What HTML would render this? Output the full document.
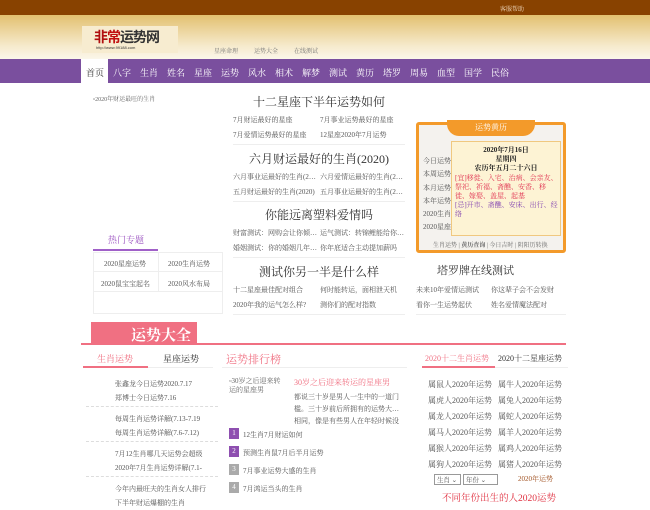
<!DOCTYPE html>
<html><head><meta charset="utf-8"><style>
*{margin:0;padding:0;box-sizing:border-box}
body{width:650px;height:500px;overflow:hidden;position:relative;background:#fff;font-family:"Liberation Serif","Noto Serif CJK SC",serif;color:#555;font-size:7px}
.a{position:absolute;white-space:nowrap}
.top{left:0;top:0;width:650px;height:15px;background:#884200}
.hdr{left:0;top:15px;width:650px;height:44px;background:linear-gradient(#e2c070,#f6eacc 70%,#fbf6ea)}
.nav{left:0;top:59px;width:650px;height:24px;background:#7a4f9e}
.nav span{position:absolute;top:7px;color:#fff;font-size:9px}
h3{position:absolute;font-weight:normal;font-size:12px;color:#333;text-align:center;width:172px;left:233px}
.sep{position:absolute;height:1px;background:#eee}
.dot{position:absolute;height:1px;border-top:1px dashed #ddd}
</style></head><body>
<div class="a top"></div>
<div class="a" style="left:500px;top:4px;color:#f3dcc0;font-size:6px">客服帮助</div>
<div class="a hdr"></div>
<div class="a" style="left:82px;top:26px;width:96px;height:27px;background:#f7ecd0"></div>
<div class="a" style="left:94px;top:27px;font-size:14px;font-weight:bold;font-family:'Noto Sans CJK SC',sans-serif;letter-spacing:-1px"><span style="color:#b01010">非</span><span style="color:#c01010">常</span><span style="color:#333">运势网</span></div>
<div class="a" style="left:96px;top:45px;font-size:4px;color:#333;font-family:'Liberation Sans',sans-serif">http://www.99188.com</div>
<div class="a" style="left:214px;top:46px;color:#777;font-size:6px">星座命理</div>
<div class="a" style="left:254px;top:46px;color:#777;font-size:6px">运势大全</div>
<div class="a" style="left:294px;top:46px;color:#777;font-size:6px">在线测试</div>
<div class="a nav">
<div style="position:absolute;left:81px;top:0;width:27px;height:24px;background:#fff"></div>
<span style="left:86px;color:#333">首页</span><span style="left:113px">八字</span><span style="left:140px">生肖</span><span style="left:167px">姓名</span><span style="left:194px">星座</span><span style="left:221px">运势</span><span style="left:248px">风水</span><span style="left:275px">相术</span><span style="left:302px">解梦</span><span style="left:329px">测试</span><span style="left:356px">黄历</span><span style="left:383px">塔罗</span><span style="left:410px">周易</span><span style="left:437px">血型</span><span style="left:464px">国学</span><span style="left:491px">民俗</span>
</div>
<div class="a" style="left:93px;top:94px;font-size:6px;color:#666">▫2020年财运最旺的生肖</div>
<div class="a" style="left:108px;top:233px;color:#9a50c0;font-size:9px">热门专题</div>
<div class="a" style="left:93px;top:249px;width:65px;height:2px;background:#a060c8"></div>
<div class="a" style="left:93px;top:252px;width:130px;height:62px;border:1px solid #eee"></div>
<div class="a" style="left:158px;top:252px;width:1px;height:39px;background:#eee"></div>
<div class="a" style="left:93px;top:271px;width:130px;height:1px;background:#eee"></div>
<div class="a" style="left:93px;top:291px;width:130px;height:1px;background:#eee"></div>
<div class="a" style="left:104px;top:259px">2020星座运势</div><div class="a" style="left:168px;top:259px">2020生肖运势</div>
<div class="a" style="left:101px;top:279px">2020鼠宝宝起名</div><div class="a" style="left:168px;top:279px">2020风水布局</div>

<h3 style="top:93px">十二星座下半年运势如何</h3>
<div class="a" style="left:233px;top:115px">7月财运最好的星座</div><div class="a" style="left:320px;top:115px">7月事业运势最好的星座</div>
<div class="a" style="left:233px;top:130px">7月爱情运势最好的星座</div><div class="a" style="left:320px;top:130px">12星座2020年7月运势</div>
<div class="sep" style="left:233px;top:144px;width:172px"></div>
<h3 style="top:150px">六月财运最好的生肖(2020)</h3>
<div class="a" style="left:233px;top:172px">六月事业运最好的生肖(2…</div><div class="a" style="left:320px;top:172px">六月爱情运最好的生肖(2…</div>
<div class="a" style="left:233px;top:187px">五月财运最好的生肖(2020)</div><div class="a" style="left:320px;top:187px">五月事业运最好的生肖(2…</div>
<div class="sep" style="left:233px;top:201px;width:172px"></div>
<h3 style="top:206px">你能远离塑料爱情吗</h3>
<div class="a" style="left:233px;top:228px">财富测试：网购会让你倾…</div><div class="a" style="left:320px;top:228px">运气测试：转锦鲤能给你…</div>
<div class="a" style="left:233px;top:243px">婚姻测试：你的婚姻几年…</div><div class="a" style="left:320px;top:243px">你年底适合主动提加薪吗</div>
<div class="sep" style="left:233px;top:257px;width:172px"></div>
<h3 style="top:263px">测试你另一半是什么样</h3>
<div class="a" style="left:233px;top:285px">十二星座最佳配对组合</div><div class="a" style="left:320px;top:285px">何时能转运，面相泄天机</div>
<div class="a" style="left:233px;top:300px">2020年我的运气怎么样?</div><div class="a" style="left:320px;top:300px">测你们的配对指数</div>
<div class="sep" style="left:233px;top:314px;width:172px"></div>

<div class="a" style="left:416px;top:122px;width:150px;height:131px;border:3px solid #f39a2a;border-radius:3px;background:#f4f2ee"></div>
<div class="a" style="left:447px;top:120px;width:88px;height:16px;background:#f39a2a;border-radius:0 0 12px 12px;color:#fff;text-align:center;font-size:8px;line-height:16px">运势黄历</div>
<div class="a" style="left:451px;top:141px;width:110px;height:95px;background:#fdf3d4;border:1px solid #f0c880"></div>
<div class="a" style="left:423px;top:155px;line-height:13.3px;font-size:7px">今日运势<br>本周运势<br>本月运势<br>本年运势<br>2020生肖<br>2020星座</div>
<div class="a" style="left:451px;top:146px;width:110px;text-align:center;color:#222;font-weight:bold;font-size:7px;line-height:9px">2020年7月16日<br>星期四<br>农历年五月二十六日</div>
<div class="a" style="left:455px;top:174px;width:104px;white-space:normal;color:#e03050;font-size:7px;line-height:9px">[宜]移徙、入宅、治病、会亲友、祭祀、祈福、斋醮、安香、移徙、嫁娶、盖屋、起基</div>
<div class="a" style="left:455px;top:201px;width:104px;white-space:normal;color:#8040b0;font-size:7px;line-height:9px">[忌]开市、斋醮、安床、出行、经络</div>
<div class="a" style="left:433px;top:240px;font-size:6px;color:#666">生肖运势 | <b>黄历查询</b> | 今日吉时 | 阴阳历转换</div>

<div class="a" style="left:437px;top:262px;font-size:11px;color:#333">塔罗牌在线测试</div>
<div class="a" style="left:416px;top:285px">未来10年爱情运测试</div><div class="a" style="left:491px;top:285px">你这辈子会不会发财</div>
<div class="a" style="left:416px;top:300px">看你一生运势起伏</div><div class="a" style="left:491px;top:300px">姓名爱情魔法配对</div>
<div class="sep" style="left:416px;top:314px;width:150px"></div>

<div class="a" style="left:91px;top:322px;width:106px;height:22px;background:#f07082"></div>
<div class="a" style="left:131px;top:324px;color:#fff;font-size:15px;font-weight:bold">运势大全</div>
<div class="a" style="left:81px;top:343px;width:485px;height:2px;background:#f07082"></div>

<div class="a" style="left:97px;top:352px;color:#f07082;font-size:9px">生肖运势</div>
<div class="a" style="left:163px;top:352px;color:#333;font-size:9px">星座运势</div>
<div class="a" style="left:83px;top:367px;width:130px;height:1px;background:#eee"></div>
<div class="a" style="left:83px;top:366px;width:65px;height:2px;background:#f07082"></div>
<div class="a" style="left:115px;top:377px;line-height:14px">张鑫龙今日运势2020.7.17<br>郑博士今日运势7.16</div>
<div class="dot" style="left:86px;top:406px;width:132px"></div>
<div class="a" style="left:115px;top:412px;line-height:14px">每周生肖运势详解(7.13-7.19<br>每周生肖运势详解(7.6-7.12)</div>
<div class="dot" style="left:86px;top:441px;width:132px"></div>
<div class="a" style="left:115px;top:447px;line-height:14px">7月12生肖哪几天运势会超级<br>2020年7月生肖运势详解(7.1-</div>
<div class="dot" style="left:86px;top:476px;width:132px"></div>
<div class="a" style="left:115px;top:482px;line-height:14px">今年内最旺夫的生肖女人排行<br>下半年财运爆棚的生肖</div>

<div class="a" style="left:226px;top:351px;color:#f07082;font-size:11px">运势排行榜</div>
<div class="a" style="left:222px;top:367px;width:185px;height:1px;background:#eee"></div>
<div class="a" style="left:229px;top:377px;font-size:7px;color:#666;line-height:9px">▫30岁之后迎来转<br>运的星座男</div>
<div class="a" style="left:294px;top:377px;color:#f07082;font-size:8px">30岁之后迎来转运的星座男</div>
<div class="a" style="left:294px;top:391px;line-height:12px;font-size:7px">都说三十岁是男人一生中的一道门<br>槛。三十岁前后所拥有的运势大…<br>相同，像是有些男人在年轻时候没</div>
<div class="a" style="left:229px;top:428px;width:10px;height:11px;background:#8e4fb0;color:#fff;text-align:center;font-size:7px;line-height:11px">1</div><div class="a" style="left:243px;top:430px">12生肖7月财运如何</div>
<div class="a" style="left:229px;top:446px;width:10px;height:11px;background:#8e4fb0;color:#fff;text-align:center;font-size:7px;line-height:11px">2</div><div class="a" style="left:243px;top:448px">预测生肖鼠7月后半月运势</div>
<div class="a" style="left:229px;top:464px;width:10px;height:11px;background:#aaa;color:#fff;text-align:center;font-size:7px;line-height:11px">3</div><div class="a" style="left:243px;top:466px">7月事业运势大盛的生肖</div>
<div class="a" style="left:229px;top:482px;width:10px;height:11px;background:#aaa;color:#fff;text-align:center;font-size:7px;line-height:11px">4</div><div class="a" style="left:243px;top:484px">7月鸿运当头的生肖</div>

<div class="a" style="left:425px;top:353px;color:#f07082;font-size:8px">2020十二生肖运势</div>
<div class="a" style="left:498px;top:353px;color:#333;font-size:8px">2020十二星座运势</div>
<div class="a" style="left:422px;top:367px;width:146px;height:1px;background:#eee"></div>
<div class="a" style="left:422px;top:366px;width:73px;height:2px;background:#f07082"></div>
<div class="a" style="left:428px;top:377px;line-height:16px;font-size:8px;color:#555">属鼠人2020年运势<br>属虎人2020年运势<br>属龙人2020年运势<br>属马人2020年运势<br>属猴人2020年运势<br>属狗人2020年运势</div>
<div class="a" style="left:498px;top:377px;line-height:16px;font-size:8px;color:#555">属牛人2020年运势<br>属兔人2020年运势<br>属蛇人2020年运势<br>属羊人2020年运势<br>属鸡人2020年运势<br>属猪人2020年运势</div>
<div class="a" style="left:434px;top:474px;width:27px;height:11px;border:1px solid #999;font-size:6.5px;padding-left:2px">生肖 ⌄</div>
<div class="a" style="left:463px;top:474px;width:35px;height:11px;border:1px solid #999;font-size:6.5px;padding-left:2px">年份 ⌄</div>
<div class="a" style="left:518px;top:474px;color:#a05020;font-size:7px">2020年运势</div>
<div class="a" style="left:442px;top:490px;color:#e03040;font-size:9.5px">不同年份出生的人2020运势</div>
</body></html>
